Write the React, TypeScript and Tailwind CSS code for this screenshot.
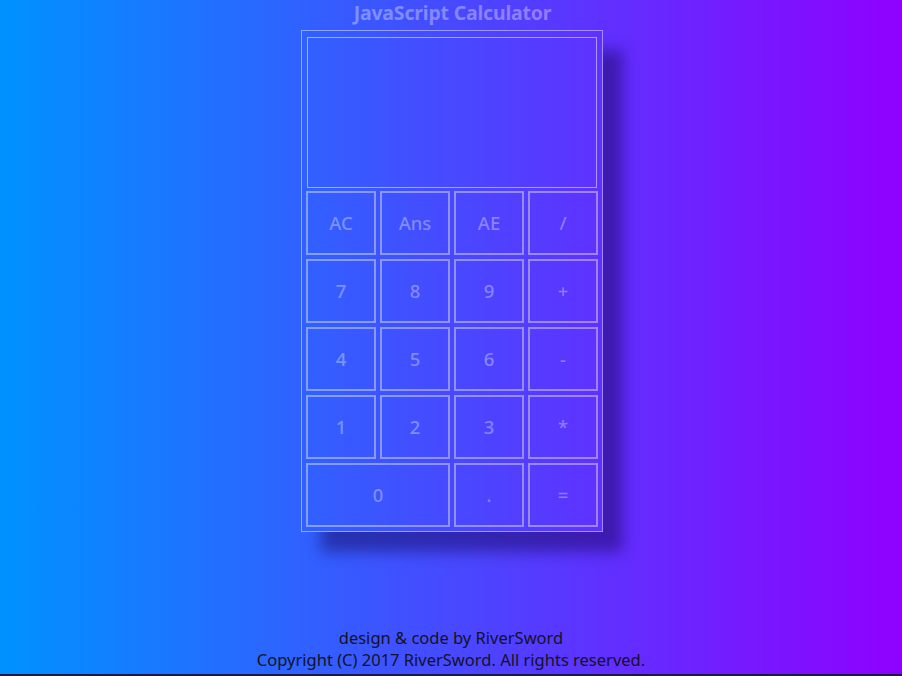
import React from "react";

const keys: { label: string; wide?: boolean }[] = [
  { label: "AC" }, { label: "Ans" }, { label: "AE" }, { label: "/" },
  { label: "7" }, { label: "8" }, { label: "9" }, { label: "+" },
  { label: "4" }, { label: "5" }, { label: "6" }, { label: "-" },
  { label: "1" }, { label: "2" }, { label: "3" }, { label: "*" },
  { label: "0", wide: true }, { label: "." }, { label: "=" },
];

export default function App() {
  return (
    <div
      className="w-full flex flex-col bg-[linear-gradient(to_right,#0092ff,#8f00ff)] border-b-2 border-[#1c1848]"
      style={{ fontFamily: '"Noto Sans", "Open Sans", sans-serif' }}
    >
      <div className="h-[674px] flex flex-col items-center">
        <h1 className="ml-[3px] h-[30px] leading-[26px] text-[19.5px] font-bold text-white/35 tracking-[-0.2px]">
          JavaScript Calculator
        </h1>
        <div className="ml-[2px] w-[302px] border border-white/45 p-[4px] shadow-[20px_20px_14px_rgba(20,0,80,0.45)]">
          <div className="mx-[1px] mt-[2px] h-[151px] border border-white/50" />
          <div className="mt-[3px] grid grid-cols-4 gap-[4px] auto-rows-[64px]">
            {keys.map((k) => (
              <button
                key={k.label}
                className={
                  "border-2 border-white/40 flex items-center justify-center text-[18.5px] font-medium text-white/35 " +
                  (k.wide ? "col-span-2" : "")
                }
              >
                {k.label}
              </button>
            ))}
          </div>
        </div>
        <div className="mt-auto mb-[3px] text-center text-[16.5px] leading-[22px] text-[#121226]">
          <div>design &amp; code by RiverSword</div>
          <div>Copyright (C) 2017 RiverSword. All rights reserved.</div>
        </div>
      </div>
    </div>
  );
}
